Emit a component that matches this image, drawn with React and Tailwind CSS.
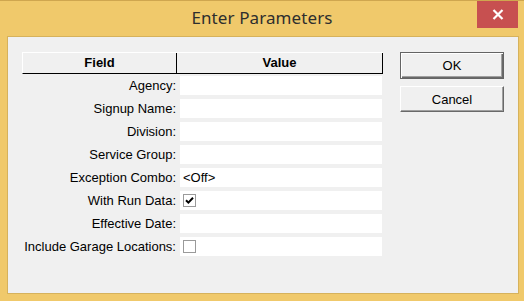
import React from "react";

const rows = [
  { label: "Agency:" },
  { label: "Signup Name:" },
  { label: "Division:" },
  { label: "Service Group:" },
  { label: "Exception Combo:", text: "<Off>" },
  { label: "With Run Data:", check: true, checked: true },
  { label: "Effective Date:" },
  { label: "Include Garage Locations:", check: true, checked: false },
];

function Check({ checked }) {
  return (
    <div className="w-[13px] h-[13px] border border-[#9a9a9a] bg-white flex items-center justify-center">
      {checked && (
        <svg width="9" height="9" viewBox="0 0 9 9">
          <path d="M1 4.2 L3.4 6.6 L8 1.8" fill="none" stroke="#000" strokeWidth="2" />
        </svg>
      )}
    </div>
  );
}

export default function App() {
  return (
    <div
      className="w-[524px] h-[301px] bg-[#f0c96b] border-t border-[#cfa64f] flex flex-col relative"
      style={{ fontFamily: '"Liberation Sans", Arial, sans-serif' }}
    >
      <div className="h-[35px] flex items-center justify-center">
        <span
          className="text-[17px] text-[#2e2e2e] tracking-[0.1px] -mt-[1px]"
          style={{ fontFamily: '"Noto Sans", "Open Sans", sans-serif' }}
        >
          Enter Parameters
        </span>
      </div>
      <div className="absolute top-0 right-[6px] w-[41px] h-[27px] bg-[#c75050] flex items-center justify-center">
        <svg width="12" height="11" viewBox="0 0 12 11">
          <path d="M1.5 1 L10.5 10 M10.5 1 L1.5 10" stroke="#fff" strokeWidth="2.2" />
        </svg>
      </div>
      <div className="ml-[7px] w-[512px] h-[258px] border border-[#d6b25c] bg-[#f0f0f0] flex pl-[14px] pt-[15px] text-[13px] text-black">
        <div className="w-[361px] flex flex-col">
          <div className="flex h-[22px] border-t border-l border-white border-b border-b-black font-bold">
            <div className="w-[154px] flex items-center justify-center border-r border-black">Field</div>
            <div className="flex-1 flex items-center justify-center border-r border-black">Value</div>
          </div>
          <div className="flex flex-col gap-[4px] mt-[2px]">
            {rows.map((r) => (
              <div key={r.label} className="flex h-[19px] items-center">
                <div className="w-[154px] text-right leading-none">{r.label}</div>
                <div className="ml-[4px] w-[202px] h-[19px] bg-white flex items-center pl-[3px] leading-none">
                  {r.check ? <Check checked={r.checked} /> : r.text}
                </div>
              </div>
            ))}
          </div>
        </div>
        <div className="ml-[17px] flex flex-col gap-[7px]">
          <button className="w-[104px] h-[27px] border border-[#646464] bg-[#f0f0f0] shadow-[inset_1px_1px_0_#ffffff,inset_-1px_-1px_0_#696969,inset_-2px_-2px_0_#a0a0a0] text-[13px] leading-none flex items-center justify-center">
            OK
          </button>
          <button className="w-[104px] h-[26px] border border-t-white border-l-white border-r-[#696969] border-b-[#696969] bg-[#f0f0f0] shadow-[inset_-1px_-1px_0_#a0a0a0] text-[13px] leading-none flex items-center justify-center">
            Cancel
          </button>
        </div>
      </div>
    </div>
  );
}
